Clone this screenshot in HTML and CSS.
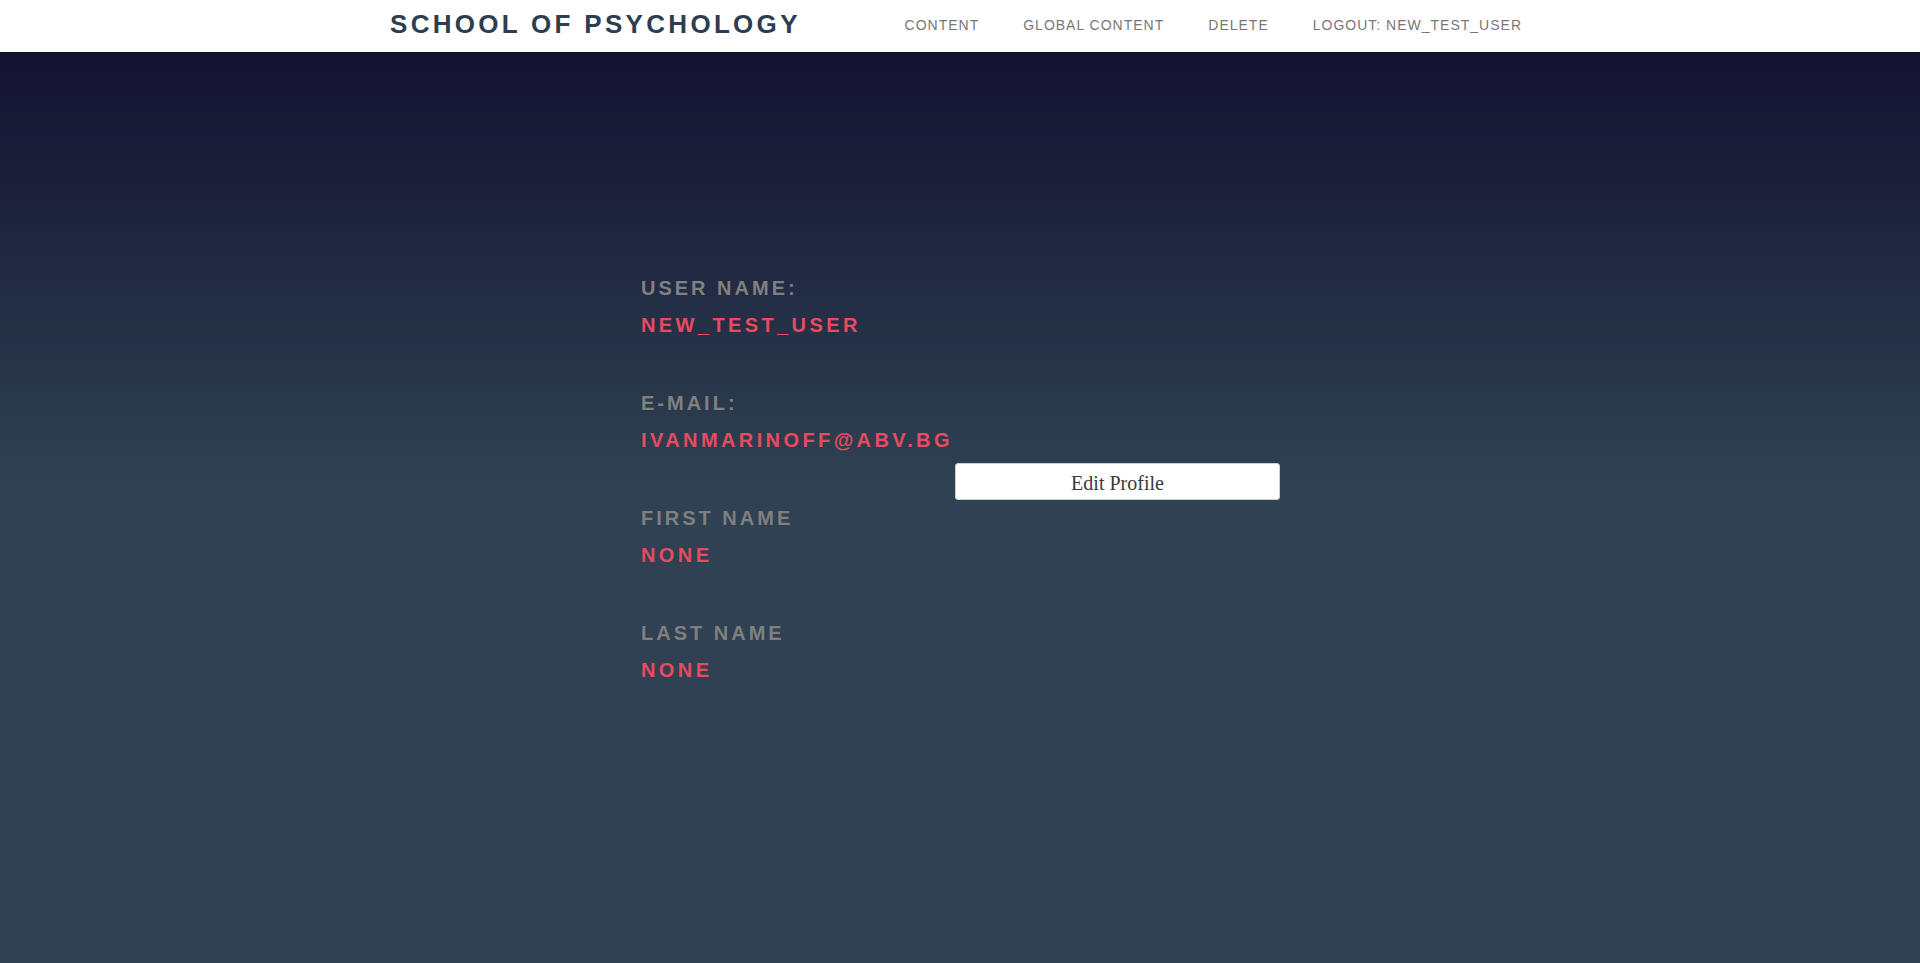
FILE: index.html
```html
<!DOCTYPE html>
<html lang="en">
<head>
<meta charset="utf-8">
<title>School of Psychology</title>
<link rel="stylesheet" href="styles.css">
</head>
<body>
<header class="topbar">
  <div class="topbar-inner">
    <a class="brand" href="#">SCHOOL OF PSYCHOLOGY</a>
    <nav class="nav">
      <a class="nav-link" href="#">CONTENT</a>
      <a class="nav-link" href="#">GLOBAL CONTENT</a>
      <a class="nav-link" href="#">DELETE</a>
      <a class="nav-link" href="#">LOGOUT: NEW_TEST_USER</a>
    </nav>
  </div>
</header>
<main class="page">
  <section class="profile">
    <div class="field">
      <div class="label">USER NAME:</div>
      <div class="value">NEW_TEST_USER</div>
    </div>
    <div class="field field-with-action">
      <div class="label">E-MAIL:</div>
      <div class="value">IVANMARINOFF@ABV.BG</div>
      <button class="edit-btn" type="button">Edit Profile</button>
    </div>
    <div class="field">
      <div class="label">FIRST NAME</div>
      <div class="value">NONE</div>
    </div>
    <div class="field">
      <div class="label">LAST NAME</div>
      <div class="value">NONE</div>
    </div>
  </section>
</main>
</body>
</html>
```
FILE: styles.css
```css
html, body {
  margin: 0;
  padding: 0;
}

body {
  font-family: "Liberation Sans", Arial, sans-serif;
  background: #2f4152;
}

.topbar {
  background: #ffffff;
  height: 52px;
}

.topbar-inner {
  width: 1140px;
  margin: 0 auto;
  display: flex;
  align-items: flex-start;
}

.brand {
  font-size: 26px;
  font-weight: bold;
  letter-spacing: 3.3px;
  line-height: 48px;
  color: #2c3e50;
  text-decoration: none;
}

.nav {
  margin-left: auto;
  margin-right: 0;
  display: flex;
  gap: 28px;
}

.nav-link {
  font-size: 14px;
  line-height: 50px;
  letter-spacing: 1px;
  color: #777777;
  text-decoration: none;
  padding: 0 8px;
}

.page {
  min-height: calc(100vh - 52px);
  background: linear-gradient(to bottom, #131230 0px, #2f4152 430px, #2f4152 100%);
  padding-top: 224px;
  box-sizing: border-box;
}

.profile {
  width: 640px;
  margin: 0 auto;
  padding-left: 1px;
  box-sizing: border-box;
  display: flex;
  flex-direction: column;
}

.field {
  display: flex;
  flex-direction: column;
  padding-bottom: 54px;
}

.field-with-action {
  padding-bottom: 6px;
}

.label {
  font-size: 20px;
  font-weight: bold;
  line-height: 24px;
  letter-spacing: 3px;
  color: #808080;
}

.value {
  margin-top: 13px;
  font-size: 20px;
  font-weight: bold;
  line-height: 24px;
  letter-spacing: 3.4px;
  color: #e84a5f;
}

.edit-btn {
  align-self: flex-end;
  margin-top: 11px;
  width: 325px;
  height: 37px;
  box-sizing: border-box;
  padding: 8px 0 4px;
  line-height: 23px;
  font-family: "Liberation Serif", "Times New Roman", serif;
  font-size: 20px;
  color: #3a3a3a;
  background: #ffffff;
  border: 1px solid #d0d0d0;
  border-radius: 3px;
}
```
